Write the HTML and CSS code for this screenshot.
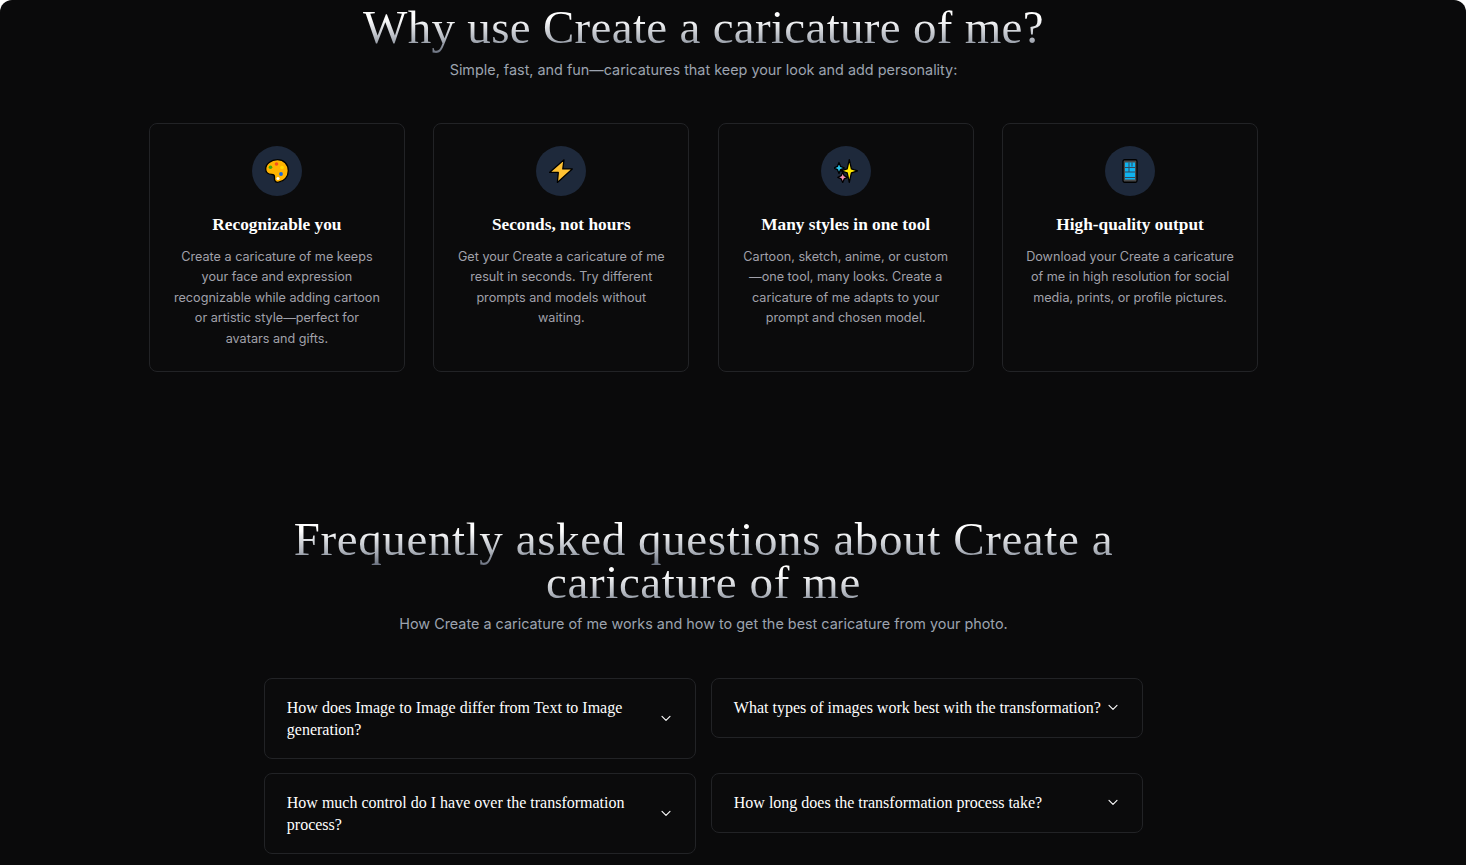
FILE: index.html
```html
<!DOCTYPE html>
<html lang="en">
<head>
    <meta charset="UTF-8">
    <meta name="viewport" content="width=device-width, initial-scale=1.0">
    <title>Create a caricature of me</title>
    <link rel="stylesheet" href="styles.css">
</head>
<body>
    <main class="page">
        <section class="why">
            <h2 class="section-title"><span>Why use Create a caricature of me?</span></h2>
            <p class="section-sub">Simple, fast, and fun—caricatures that keep your look and add personality:</p>
            <div class="card-grid">
                <div class="card">
                    <div class="card-icon">
                        <svg width="24" height="24" viewBox="0 0 24 24">
                            <path class="outline" d="M12.500.7C6 .7.7 4.800.7 10c0 3.600 3 5.400 6 5.400 2 0 2.800.6 2.800 2.300 0 1.500-.2 2.500.3 3.800.6 1.500 2 2 3.800 1.700 5.600-.9 9.700-5.500 9.700-11.400 0-6.500-4.500-11.100-10.800-11.100z" fill="#ffb300"/>
                            <circle cx="11.500" cy="5" r="1.800" fill="#f4511e"/>
                            <circle cx="5.500" cy="8.300" r="1.800" fill="#43a80f"/>
                            <circle cx="17" cy="8.500" r="1.800" fill="#ffd600"/>
                            <circle cx="16" cy="15" r="1.900" fill="#1565e0"/>
                            <circle cx="13" cy="19.500" r="1.600" fill="#fff"/>
                        </svg>
                    </div>
                    <h3 class="card-title">Recognizable you</h3>
                    <p class="card-text">Create a caricature of me keeps your face and expression recognizable while adding cartoon or artistic style—perfect for avatars and gifts.</p>
                </div>
                <div class="card">
                    <div class="card-icon">
                        <svg width="24" height="24" viewBox="0 0 24 24">
                            <path class="outline" d="M15 .8 .5 13.400h8.800L8.400 23.400 23.300 9.900h-9.500z" fill="#ffc233"/>
                        </svg>
                    </div>
                    <h3 class="card-title">Seconds, not hours</h3>
                    <p class="card-text">Get your Create a caricature of me result in seconds. Try different prompts and models without waiting.</p>
                </div>
                <div class="card">
                    <div class="card-icon">
                        <svg width="24" height="24" viewBox="0 0 24 24">
                            <path class="outline" d="M5 3.500l1.600 3.900L10.500 9l-3.900 1.600L5 14.500l-1.600-3.900L0 9l3.400-1.600z" fill="#2bc4ea"/>
                            <path class="outline" d="M8.700 13.200l1.500 3.500 3.400 1.600-3.400 1.600-1.500 3.600-1.500-3.600-3.400-1.600 3.400-1.600z" fill="#f48fb1"/>
                            <path class="outline" d="M15.300.6l2.100 9.200 6.200 2-6.200 2-2.100 9.600-2.100-9.600-6.200-2 6.200-2z" fill="#ffe600"/>
                        </svg>
                    </div>
                    <h3 class="card-title">Many styles in one tool</h3>
                    <p class="card-text">Cartoon, sketch, anime, or custom—one tool, many looks. Create a caricature of me adapts to your prompt and chosen model.</p>
                </div>
                <div class="card">
                    <div class="card-icon">
                        <svg width="16" height="24" viewBox="0 0 16 24">
                            <rect class="outline" x="1" y="0.750" width="14" height="22.500" rx="1.500" fill="#4a4a4a"/>
                            <rect x="3" y="3.500" width="10" height="17" fill="#0fb4f0"/>
                            <path d="M3 8.500h10M3 13h10M7 3.500v9.500M10 3.500v4M3 18.500h10" stroke="#33475a" stroke-width="1" fill="none"/>
                        </svg>
                    </div>
                    <h3 class="card-title">High-quality output</h3>
                    <p class="card-text">Download your Create a caricature of me in high resolution for social media, prints, or profile pictures.</p>
                </div>
            </div>
        </section>

        <section class="faq">
            <h2 class="section-title faq-title"><span>Frequently asked questions about Create a caricature of me</span></h2>
            <p class="section-sub">How Create a caricature of me works and how to get the best caricature from your photo.</p>
            <div class="faq-grid">
                <div class="faq-item">
                    <span>How does Image to Image differ from Text to Image generation?</span>
                    <svg class="chevron" width="16" height="16" viewBox="0 0 24 24"><path d="m6 8 6 6 6-6"/></svg>
                </div>
                <div class="faq-item">
                    <span>What types of images work best with the transformation?</span>
                    <svg class="chevron" width="16" height="16" viewBox="0 0 24 24"><path d="m6 8 6 6 6-6"/></svg>
                </div>
                <div class="faq-item">
                    <span>How much control do I have over the transformation process?</span>
                    <svg class="chevron" width="16" height="16" viewBox="0 0 24 24"><path d="m6 8 6 6 6-6"/></svg>
                </div>
                <div class="faq-item">
                    <span>How long does the transformation process take?</span>
                    <svg class="chevron" width="16" height="16" viewBox="0 0 24 24"><path d="m6 8 6 6 6-6"/></svg>
                </div>
            </div>
        </section>
    </main>
</body>
</html>
```

FILE: styles.css
```css
* {
    box-sizing: border-box;
}
html, body {
    height: 100%;
}
body {
    margin: 0;
    background-color: #ffffff;
    font-family: Inter, "Liberation Sans", sans-serif;
    overflow: hidden;
}
.page {
    height: 865px;
    overflow: hidden;
    background-color: #0a0a0b;
    border-radius: 12px 12px 0 0;
    padding-right: 59px;
}
.why, .faq {
    display: flex;
    flex-direction: column;
    align-items: center;
}
.section-title {
    margin: 0;
    font-family: "Liberation Serif", serif;
    font-weight: 400;
    font-size: 47px;
    line-height: 43px;
    letter-spacing: 0.3px;
    text-align: center;
}
/* gradient restarts on every line of a wrapped heading */
.section-title span {
    background: linear-gradient(180deg, #ffffff 35%, #a9aeb7 75%, #6b7280 100%);
    -webkit-background-clip: text;
    background-clip: text;
    -webkit-box-decoration-break: clone;
    box-decoration-break: clone;
    color: transparent;
}
.why .section-title {
    margin-top: 6px;
}
.section-sub {
    margin: 10px 0 0;
    font-size: 14.4px;
    line-height: 22px;
    color: #9ca3af;
    text-align: center;
}
.card-grid {
    display: grid;
    grid-template-columns: repeat(4, 256px);
    column-gap: 28.400px;
    margin-top: 42px;
}
.card {
    height: 249px;
    padding: 22px 22px;
    border: 1px solid #222326;
    border-radius: 8px;
    background-color: #0b0b0c;
    text-align: center;
}
.card-icon {
    width: 50px;
    height: 50px;
    margin: 0 auto;
    border-radius: 50%;
    background-color: #1e293b;
    display: flex;
    align-items: center;
    justify-content: center;
}
.outline {
    stroke: #000000;
    stroke-width: 1.300;
    stroke-linejoin: round;
}
.card-title {
    margin: 17px 0 0;
    font-family: "Liberation Serif", serif;
    font-size: 17.300px;
    line-height: 24px;
    font-weight: 700;
    color: #ffffff;
}
.card-text {
    margin: 9.600px 0 0;
    font-size: 12.640px;
    line-height: 20.500px;
    color: #a1a1aa;
}
.faq {
    margin-top: 146px;
}
.faq-title {
    width: 860px;
    letter-spacing: 0.6px;
}
.faq .section-sub {
    margin-top: 9px;
}
.faq-grid {
    display: grid;
    grid-template-columns: 432px 432px;
    column-gap: 15px;
    row-gap: 14px;
    align-items: start;
    margin-top: 43px;
}
.faq-item {
    display: flex;
    align-items: center;
    justify-content: space-between;
    gap: 4px;
    padding: 18px 21px 18px 21.800px;
    border: 1px solid #222326;
    border-radius: 8px;
    background-color: #0b0b0c;
    font-family: "Liberation Serif", serif;
    font-size: 16px;
    line-height: 21.500px;
    color: #ffffff;
}
.chevron {
    flex-shrink: 0;
    fill: none;
    stroke: #ffffff;
    stroke-width: 1.700;
    stroke-linecap: round;
    stroke-linejoin: round;
}
```
